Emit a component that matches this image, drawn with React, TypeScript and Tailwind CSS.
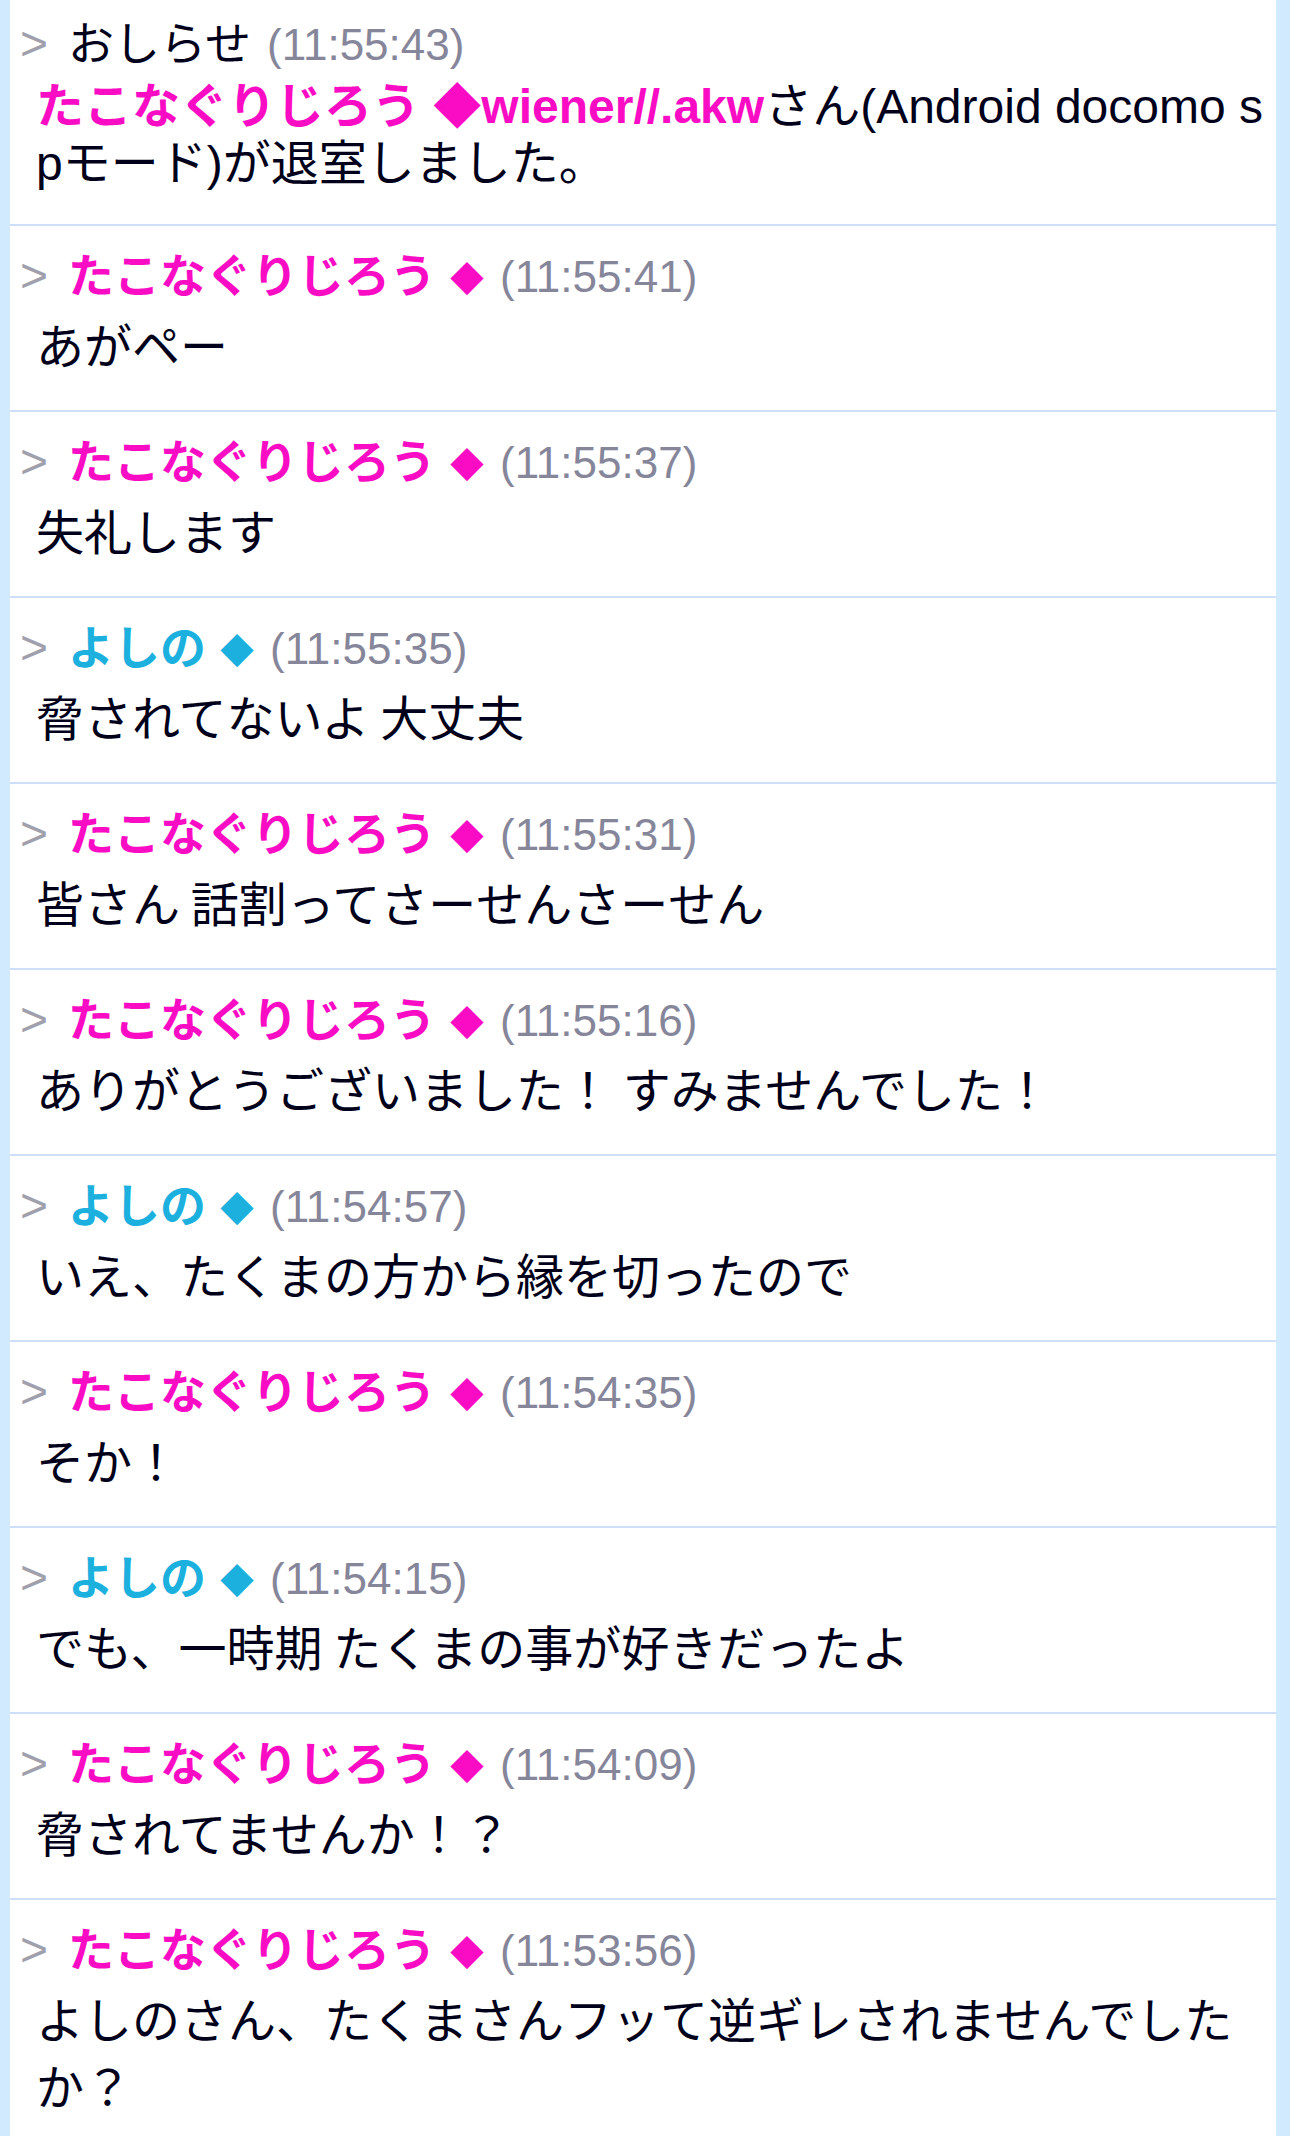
import { ReactNode } from "react";

type Message = {
  name: string;
  color: "pink" | "blue";
  time: string;
  text: string;
};

const messages: Message[] = [
  { name: "たこなぐりじろう", color: "pink", time: "11:55:41", text: "あがペー" },
  { name: "たこなぐりじろう", color: "pink", time: "11:55:37", text: "失礼します" },
  { name: "よしの", color: "blue", time: "11:55:35", text: "脅されてないよ 大丈夫" },
  { name: "たこなぐりじろう", color: "pink", time: "11:55:31", text: "皆さん 話割ってさーせんさーせん" },
  { name: "たこなぐりじろう", color: "pink", time: "11:55:16", text: "ありがとうございました！ すみませんでした！" },
  { name: "よしの", color: "blue", time: "11:54:57", text: "いえ、たくまの方から縁を切ったので" },
  { name: "たこなぐりじろう", color: "pink", time: "11:54:35", text: "そか！" },
  { name: "よしの", color: "blue", time: "11:54:15", text: "でも、一時期 たくまの事が好きだったよ" },
  { name: "たこなぐりじろう", color: "pink", time: "11:54:09", text: "脅されてませんか！？" },
  {
    name: "たこなぐりじろう",
    color: "pink",
    time: "11:53:56",
    text: "よしのさん、たくまさんフッて逆ギレされませんでしたか？",
  },
];

const Header = ({ children, time }: { children: ReactNode; time: string }) => (
  <div className="h-[67px] pl-[10px] text-[48px] leading-[67px] whitespace-nowrap">
    <span className="inline-block w-[48px] text-[#a0a0ac]">&gt;</span>
    {children}
    <span className="ml-[16px] text-[44px] text-[#86869a]">({time})</span>
  </div>
);

const App = () => {
  return (
    <div className="min-h-screen bg-[#d1eafd] pl-[10px] pr-[14px] [font-family:'Liberation_Sans','Noto_Sans_CJK_JP',sans-serif]">
      <div className="bg-white">
        {/* system notice */}
        <div className="border-b-2 border-[#cfdffa] pt-[10px] pb-[32px]">
          <Header time="11:55:43">
            <span className="text-[46px] text-[#00001a]">おしらせ</span>
          </Header>
          <div className="mt-[1px] h-[114px] pl-[26px] text-[48px] leading-[57px] text-[#00001a] break-all">
            <span className="font-bold text-[#fa0cc4]">たこなぐりじろう ◆wiener//.akw</span>
            さん(Android docomo spモード)が退室しました。
          </div>
        </div>

        {messages.map((msg, index) => (
          <div key={index} className="border-b-2 border-[#cfdffa] pt-[16px] pb-[33px]">
            <Header time={msg.time}>
              <span
                className={
                  msg.color === "pink"
                    ? "font-bold text-[46px] text-[#fa0cc4]"
                    : "font-bold text-[46px] text-[#1bb0de]"
                }
              >
                {msg.name}
              </span>
              <span
                className={
                  msg.color === "pink"
                    ? "ml-[14px] text-[34px] text-[#fa0cc4]"
                    : "ml-[14px] text-[34px] text-[#1bb0de]"
                }
              >
                ◆
              </span>
            </Header>
            <div className="mt-[1px] pl-[26px] text-[48px] leading-[67px] text-[#00001a] break-all [font-family:'Noto_Sans_CJK_JP',sans-serif]">
              {msg.text}
            </div>
          </div>
        ))}
      </div>
    </div>
  );
};

export default App;
